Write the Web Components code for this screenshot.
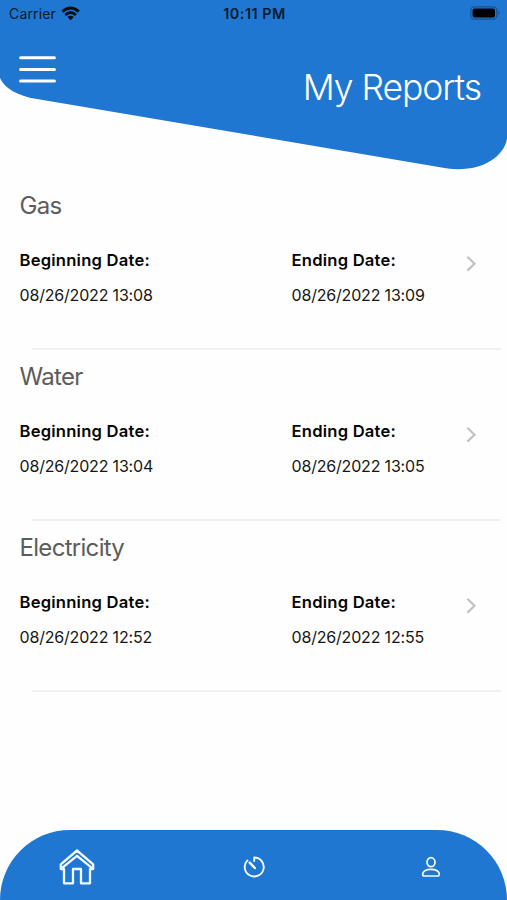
<!DOCTYPE html>
<html lang="en">
<head>
<meta charset="utf-8">
<title>My Reports</title>
<style>
html,body{margin:0;height:100%;background:#fefefe;overflow:hidden}
body{font-family:Inter,"Liberation Sans",sans-serif;color:#0c0c0c}
</style>
</head>
<body>
<reports-app></reports-app>
<script>
const define = (name, html) => {
  const t = document.createElement('template');
  t.innerHTML = html;
  customElements.define(name, class extends HTMLElement {
    constructor() {
      super();
      this.attachShadow({mode: 'open'}).append(t.content.cloneNode(true));
    }
  });
};

define('status-bar', `
<style>
:host{display:grid;grid-template-columns:1fr auto 1fr;align-items:center;height:28px;padding:0 6px 0 9px;color:#06192e;font-size:14px;line-height:28px;box-sizing:border-box}
.l{display:flex;align-items:center;gap:5.5px;letter-spacing:.15px}
.l svg{margin-top:-2px}
.c{font-weight:600;font-size:14.4px;letter-spacing:.5px;margin-right:1px}
.r{justify-self:end;margin-top:-2px}
svg{display:block}
</style>
<div class="l"><span>Carrier</span>
<svg width="20" height="15" viewBox="0 0 20 15"><g fill="none" stroke="#000c18" stroke-width="2.9"><path d="M1.4 5.6Q9.6 -1.6 17.8 5.6"/><path d="M4.3 9Q9.6 4.2 14.9 9"/></g><path d="M6.4 11Q9.6 8.4 12.8 11L9.6 14.2Z" fill="#000c18"/></svg></div>
<span class="c">10:11 PM</span>
<svg class="r" width="31" height="14" viewBox="0 0 31 14"><rect x=".8" y=".8" width="26" height="12.4" rx="3.6" fill="none" stroke="#17518e" stroke-width="1.2"/><rect x="2.6" y="2.6" width="22.4" height="8.8" rx="2" fill="#000"/><path d="M28.4 4.8Q30.8 7 28.4 9.2Z" fill="#17518e"/></svg>`);

define('menu-button', `
<style>:host{display:block;width:37px}svg{display:block}</style>
<svg width="37" height="29" viewBox="0 0 37 29"><path d="M1.6 2.7H35.4M1.6 14.5H35.4M1.6 26.1H35.4" stroke="#fff" stroke-width="3" stroke-linecap="round"/></svg>`);

define('app-header', `
<style>
:host{display:grid;height:178px;flex:none}
.bg,.content{grid-area:1/1}
.bg{display:block}
.row{display:flex;justify-content:space-between;align-items:flex-start;padding:27px 26px 0 19px}
h1{margin:11px 0 0;font-size:35.5px;line-height:44px;font-weight:350;color:#fff;letter-spacing:-1.05px}
</style>
<svg class="bg" width="507" height="178" viewBox="0 0 507 178"><path d="M0 0H507V139C503 159 478 173 446 168.3L34 98.5C18 95.5 5 89 0 78Z" fill="#2077d1"/></svg>
<div class="content"><status-bar></status-bar><div class="row"><menu-button></menu-button><h1><slot></slot></h1></div></div>`);

define('date-field', `
<style>
:host{display:block}
b{display:block;font-size:16.6px;line-height:20px;font-weight:600;color:#050505;letter-spacing:.22px}
.v{display:block;margin-top:15px;font-size:16px;line-height:20px;letter-spacing:-.18px;white-space:nowrap;color:#161616}
</style>
<b><slot name="label"></slot></b><span class="v"><slot></slot></span>`);

define('report-row', `
<style>
:host{display:block;height:171px;box-sizing:border-box;padding:13px 6px 0 19.5px}
h2{margin:0;font-size:24px;line-height:30px;font-weight:400;color:#5c5c5c;letter-spacing:-.7px}
.f{display:grid;grid-template-columns:272px 174px auto;margin-top:29px;height:99px;align-items:start}
svg{display:block;margin-top:5px}
hr{height:2px;margin:-1px 0 0 12px;border:0;background:#f0f0f0}
</style>
<h2><slot name="title"></slot></h2>
<div class="f"><slot></slot><svg width="11" height="17" viewBox="0 0 11 17"><path d="M1.4 1.8L8.5 8.7L1.4 15.6" fill="none" stroke="#c2c2c4" stroke-width="2.2"/></svg></div>
<hr>`);

define('tab-bar', `
<style>
:host{display:grid;grid-template-columns:153px 1fr 153px;align-items:center;justify-items:center;height:70px;margin-top:auto;flex:none;box-sizing:border-box;padding-top:4px;background:#2077d1;border-radius:70px 70px 0 0/70px 70px 0 0}
svg{display:block;fill:none;stroke:#f4fbff;stroke-linejoin:round;stroke-linecap:round}
</style>
<svg width="36" height="36" viewBox="0 0 36 36" stroke-width="2.3"><path d="M18 1.5L34.2 15.3V20H31V34.3H22V20H14V34.3H5V20H1.8V15.3Z"/><path d="M2 19.8L18 6.8L34 19.8"/></svg>
<svg width="22" height="22" viewBox="0 0 22 22" stroke-width="1.9"><path d="M11.2 5V1.5A9.5 9.5 0 1 1 4.4 4.4"/><path d="M6.7 6.7L11.8 12" stroke-width="2.5"/></svg>
<svg width="20" height="22" viewBox="0 0 20 22" stroke-width="1.7"><ellipse cx="10" cy="6.2" rx="4" ry="4.5"/><path d="M1.7 18.4C1.5 15.2 5 13.4 10 13.4S18.5 15.2 18.3 18.4Q18.3 20 16.7 20H3.3Q1.7 20 1.7 18.4Z"/></svg>`);

define('reports-app', `
<style>:host{display:flex;flex-direction:column;width:507px;height:900px;overflow:hidden}</style>
<app-header>My Reports</app-header>
<main>
<report-row><span slot="title">Gas</span><date-field><span slot="label">Beginning Date:</span>08/26/2022 13:08</date-field><date-field><span slot="label">Ending Date:</span>08/26/2022 13:09</date-field></report-row>
<report-row><span slot="title">Water</span><date-field><span slot="label">Beginning Date:</span>08/26/2022 13:04</date-field><date-field><span slot="label">Ending Date:</span>08/26/2022 13:05</date-field></report-row>
<report-row><span slot="title">Electricity</span><date-field><span slot="label">Beginning Date:</span>08/26/2022 12:52</date-field><date-field><span slot="label">Ending Date:</span>08/26/2022 12:55</date-field></report-row>
</main>
<tab-bar></tab-bar>`);
</script>
</body>
</html>
